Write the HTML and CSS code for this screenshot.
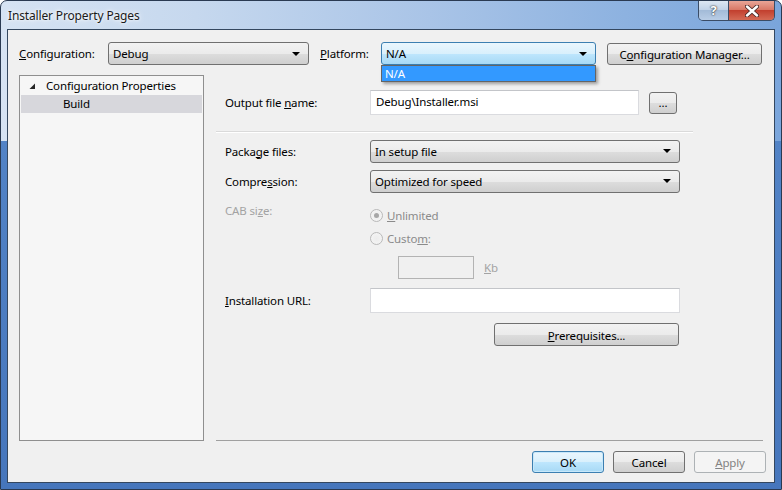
FILE: index.html
```html
<!DOCTYPE html>
<html lang="en">
<head>
    <meta charset="UTF-8">
    <title>Installer Property Pages</title>
    <link rel="stylesheet" href="styles.css">
</head>
<body>
<div class="window">
    <!-- title bar -->
    <div class="titlebar">
        <span class="title">Installer Property Pages</span>
        <div class="caption-btns">
            <div class="cap-help">?</div>
            <div class="cap-close">
                <svg width="14" height="12" viewBox="0 0 14 12">
                    <path d="M2 1.5 L12 10.5 M12 1.5 L2 10.5" stroke="#4a2a28" stroke-width="4.2" stroke-linecap="round"/>
                    <path d="M2 1.5 L12 10.5 M12 1.5 L2 10.5" stroke="#ffffff" stroke-width="2.4" stroke-linecap="round"/>
                </svg>
            </div>
        </div>
    </div>

    <div class="client">
        <!-- configuration / platform row -->
        <div class="topbar">
            <span class="lbl-config"><u>C</u>onfiguration:</span>
            <div class="combo combo-config">
                <span class="combo-text">Debug</span>
                <span class="arrow"></span>
            </div>
            <span class="lbl-platform"><u>P</u>latform:</span>
            <div class="combo combo-platform focus">
                <span class="combo-text">N/A</span>
                <span class="arrow"></span>
                <div class="droplist">N/A</div>
            </div>
            <button class="btn btn-cfgmgr">C<u>o</u>nfiguration Manager...</button>
        </div>

        <div class="main">
            <!-- tree -->
            <div class="tree">
                <div class="tree-row">
                    <svg class="expander" width="7" height="7" viewBox="0 0 7 7">
                        <polygon points="6,0.5 6,6 0.5,6" fill="#262626"/>
                    </svg>
                    <span>Configuration Properties</span>
                </div>
                <div class="tree-row child selected">Build</div>
            </div>

            <!-- property page -->
            <div class="props">
                <div class="row row-output">
                    <span class="plabel">Output file <u>n</u>ame:</span>
                    <div class="textbox tb-output">Debug\Installer.msi</div>
                    <button class="btn btn-browse">...</button>
                </div>

                <div class="separator"></div>

                <div class="row row-package">
                    <span class="plabel">Packa<u>g</u>e files:</span>
                    <div class="combo combo-wide">
                        <span class="combo-text">In setup file</span>
                        <span class="arrow"></span>
                    </div>
                </div>

                <div class="row row-compress">
                    <span class="plabel">Compre<u>s</u>sion:</span>
                    <div class="combo combo-wide">
                        <span class="combo-text">Optimized for speed</span>
                        <span class="arrow"></span>
                    </div>
                </div>

                <div class="cab">
                    <span class="plabel disabled">CAB si<u>z</u>e:</span>
                    <div class="cab-opts">
                        <div class="radio-row">
                            <span class="radio checked"></span>
                            <span class="radio-text"><u>U</u>nlimited</span>
                        </div>
                        <div class="radio-row custom">
                            <span class="radio"></span>
                            <span class="radio-text">Custo<u>m</u>:</span>
                        </div>
                        <div class="kb-row">
                            <div class="textbox tb-kb"></div>
                            <span class="kb"><u>K</u>b</span>
                        </div>
                    </div>
                </div>

                <div class="row row-url">
                    <span class="plabel"><u>I</u>nstallation URL:</span>
                    <div class="textbox tb-url"></div>
                </div>

                <div class="row row-prereq">
                    <button class="btn btn-prereq"><u>P</u>rerequisites...</button>
                </div>
            </div>
        </div>

        <!-- dialog buttons -->
        <div class="footer">
            <button class="btn btn-ok">OK</button>
            <button class="btn">Cancel</button>
            <button class="btn btn-disabled"><u>A</u>pply</button>
        </div>
    </div>
</div>
</body>
</html>
```

FILE: styles.css
```css
body {
    margin: 0;
    width: 782px;
    height: 490px;
    overflow: hidden;
    font-family: "Noto Sans", "Open Sans", sans-serif;
    font-size: 11.5px;
    letter-spacing: -0.15px;
    color: #000;
}

.window {
    width: 782px;
    height: 490px;
    box-sizing: border-box;
    border: 1px solid #2a3a52;
    border-radius: 7px 7px 0 0;
    display: flex;
    flex-direction: column;
    background:
        linear-gradient(to bottom, rgba(0,0,0,0) 0, rgba(0,0,0,0) 140px, #5283c6 140px, #4676bc 100%),
        linear-gradient(to right, #d6e3f3 0%, #c6d8ee 25%, #a9c4e7 55%, #8db2e0 80%, #7aa5db 100%);
}

.titlebar {
    height: 28px;
    display: flex;
    align-items: flex-start;
}

.title {
    margin: 7px 0 0 7px;
    line-height: 16px;
    font-size: 12px;
    color: #1b1b1b;
    text-shadow: 0 0 6px #fff, 0 0 3px #fff;
}

.caption-btns {
    margin-left: auto;
    margin-right: 6px;
    display: flex;
    height: 19px;
    border: 1px solid #3a4c66;
    border-top: none;
    border-radius: 0 0 5px 5px;
    overflow: hidden;
}

.cap-help {
    width: 29px;
    text-align: center;
    font-weight: bold;
    font-size: 13px;
    line-height: 18px;
    color: #fff;
    text-shadow: 0 0 2px #333, 0 0 1px #333;
    border-right: 1px solid #3a4c66;
    background: linear-gradient(to bottom, #dde7f3 0%, #c2d3e8 45%, #a3bbd8 50%, #b9cde6 100%);
}

.cap-close {
    width: 45px;
    display: flex;
    align-items: center;
    justify-content: center;
    background: linear-gradient(to bottom, #e8a597 0%, #d87967 45%, #c2402f 50%, #d46a55 100%);
}

.client {
    flex: 1;
    margin: 0 6px 6px 6px;
    border: 1px solid #34475f;
    background: #f0f0f0;
}

/* top row */
.topbar {
    display: flex;
    align-items: center;
    height: 23px;
    margin: 12px 0 0 11px;
}

.lbl-config {
    width: 89px;
}

.lbl-platform {
    width: 61px;
    margin-left: 11px;
}

.combo {
    position: relative;
    display: flex;
    align-items: center;
    box-sizing: border-box;
    height: 23px;
    border: 1px solid #707070;
    border-radius: 3px;
    background: linear-gradient(to bottom, #f2f2f2 0%, #ebebeb 50%, #dddddd 51%, #cfcfcf 100%);
    padding: 0 8px 0 4px;
}

.combo-text {
    flex: 1;
}

.arrow {
    width: 0;
    height: 0;
    border-left: 4px solid transparent;
    border-right: 4px solid transparent;
    border-top: 4px solid #000;
}

.combo-config {
    width: 201px;
}

.combo-platform {
    width: 215px;
    height: 23px;
    padding-right: 8px;
}

.combo.focus {
    border-color: #3c7fb1;
    background: linear-gradient(to bottom, #eaf6fd 0%, #d9f0fc 50%, #bee6fd 51%, #a7d9f5 100%);
}

.droplist {
    position: absolute;
    left: -1px;
    top: 22px;
    width: 215px;
    height: 17px;
    box-sizing: border-box;
    border: 1px solid #646464;
    background: #3399ff;
    color: #fff;
    padding-left: 3px;
    line-height: 16px;
    box-shadow: 2px 2px 3px rgba(0,0,0,0.35);
}

.btn {
    font-family: "Noto Sans", "Open Sans", sans-serif;
    font-size: 11.5px;
    letter-spacing: -0.15px;
    color: #000;
    box-sizing: border-box;
    height: 22px;
    padding: 1px 0 0 0;
    border: 1px solid #707070;
    border-radius: 3px;
    background: linear-gradient(to bottom, #f2f2f2 0%, #ebebeb 50%, #dddddd 51%, #cfcfcf 100%);
}

.btn-cfgmgr {
    width: 155px;
    height: 22px;
    margin-left: 11px;
}

/* tree + pages */
.main {
    display: flex;
    margin-top: 10px;
    padding-left: 11px;
    height: 366px;
}

.tree {
    width: 185px;
    height: 366px;
    box-sizing: border-box;
    border: 1px solid #8f8f8f;
    background: #f6f6f6;
    padding: 1px 1px 0 1px;
}

.tree-row {
    height: 18px;
    line-height: 18px;
    display: flex;
    align-items: center;
}

.expander {
    margin: 0 10px 0 8px;
}

.tree-row.child {
    padding-left: 42px;
}

.tree-row.selected {
    background: #d7d7dc;
}

.props {
    width: 547px;
    margin-left: 12px;
    box-sizing: border-box;
    border-bottom: 1px solid #a0a0a0;
    padding-left: 9px;
}

.row {
    display: flex;
    align-items: center;
}

.plabel {
    width: 145px;
    flex-shrink: 0;
}

.textbox {
    box-sizing: border-box;
    height: 25px;
    background: #fff;
    border: 1px solid #dadbdf;
    border-top-color: #c3c5c9;
    padding: 0 5px;
    line-height: 22px;
}

.row-output {
    margin-top: 15px;
    height: 25px;
}

.tb-output {
    width: 269px;
}

.btn-browse {
    width: 28px;
    height: 22px;
    margin-left: 10px;
    line-height: 10px;
}

.separator {
    width: 477px;
    margin: 16px 0 7px -9px;
    border-top: 1px solid #dadada;
    border-bottom: 1px solid #ffffff;
}

.row-package {
    height: 22px;
}

.row-compress {
    height: 22px;
    margin-top: 8px;
}

.combo-wide {
    width: 310px;
    height: 23px;
}

.cab {
    display: flex;
    margin-top: 12px;
}

.disabled {
    color: #a3a3a3;
    line-height: 14px;
}

.cab-opts {
    display: flex;
    flex-direction: column;
}

.radio-row {
    display: flex;
    align-items: center;
    height: 20px;
    margin-top: 1px;
    color: #8b8b8b;
}

.radio-row.custom {
    margin-top: 3px;
}

.radio {
    width: 11px;
    height: 11px;
    border: 1px solid #b9b9b9;
    border-radius: 50%;
    background: radial-gradient(circle, #ececec 0%, #f6f6f6 100%);
    margin-right: 4px;
    display: flex;
    align-items: center;
    justify-content: center;
}

.radio.checked::before {
    content: "";
    width: 5px;
    height: 5px;
    border-radius: 50%;
    background: #a7a7a7;
}

.kb-row {
    display: flex;
    align-items: center;
    margin: 8px 0 0 28px;
    height: 23px;
}

.tb-kb {
    width: 76px;
    height: 23px;
    background: #f0f0f0;
    border: 1px solid #b3b3b3;
}

.kb {
    margin-left: 10px;
    color: #a3a3a3;
}

.row-url {
    margin-top: 9px;
    height: 25px;
}

.tb-url {
    width: 310px;
}

.row-prereq {
    margin-top: 10px;
    padding-left: 269px;
}

.btn-prereq {
    width: 185px;
    height: 23px;
}

/* bottom buttons */
.footer {
    display: flex;
    justify-content: flex-end;
    gap: 9px;
    margin-top: 10px;
    padding-right: 8px;
}

.footer .btn {
    width: 72px;
    height: 22px;
}

.btn-ok {
    border-color: #3c7fb1 !important;
    background: linear-gradient(to bottom, #eaf6fd 0%, #d9f0fc 50%, #bee6fd 51%, #a7d9f5 100%) !important;
    box-shadow: inset 0 0 0 1px #c8e8fa;
}

.btn-disabled {
    border-color: #adb2b5 !important;
    background: #f4f4f4 !important;
    color: #838383 !important;
}
```
